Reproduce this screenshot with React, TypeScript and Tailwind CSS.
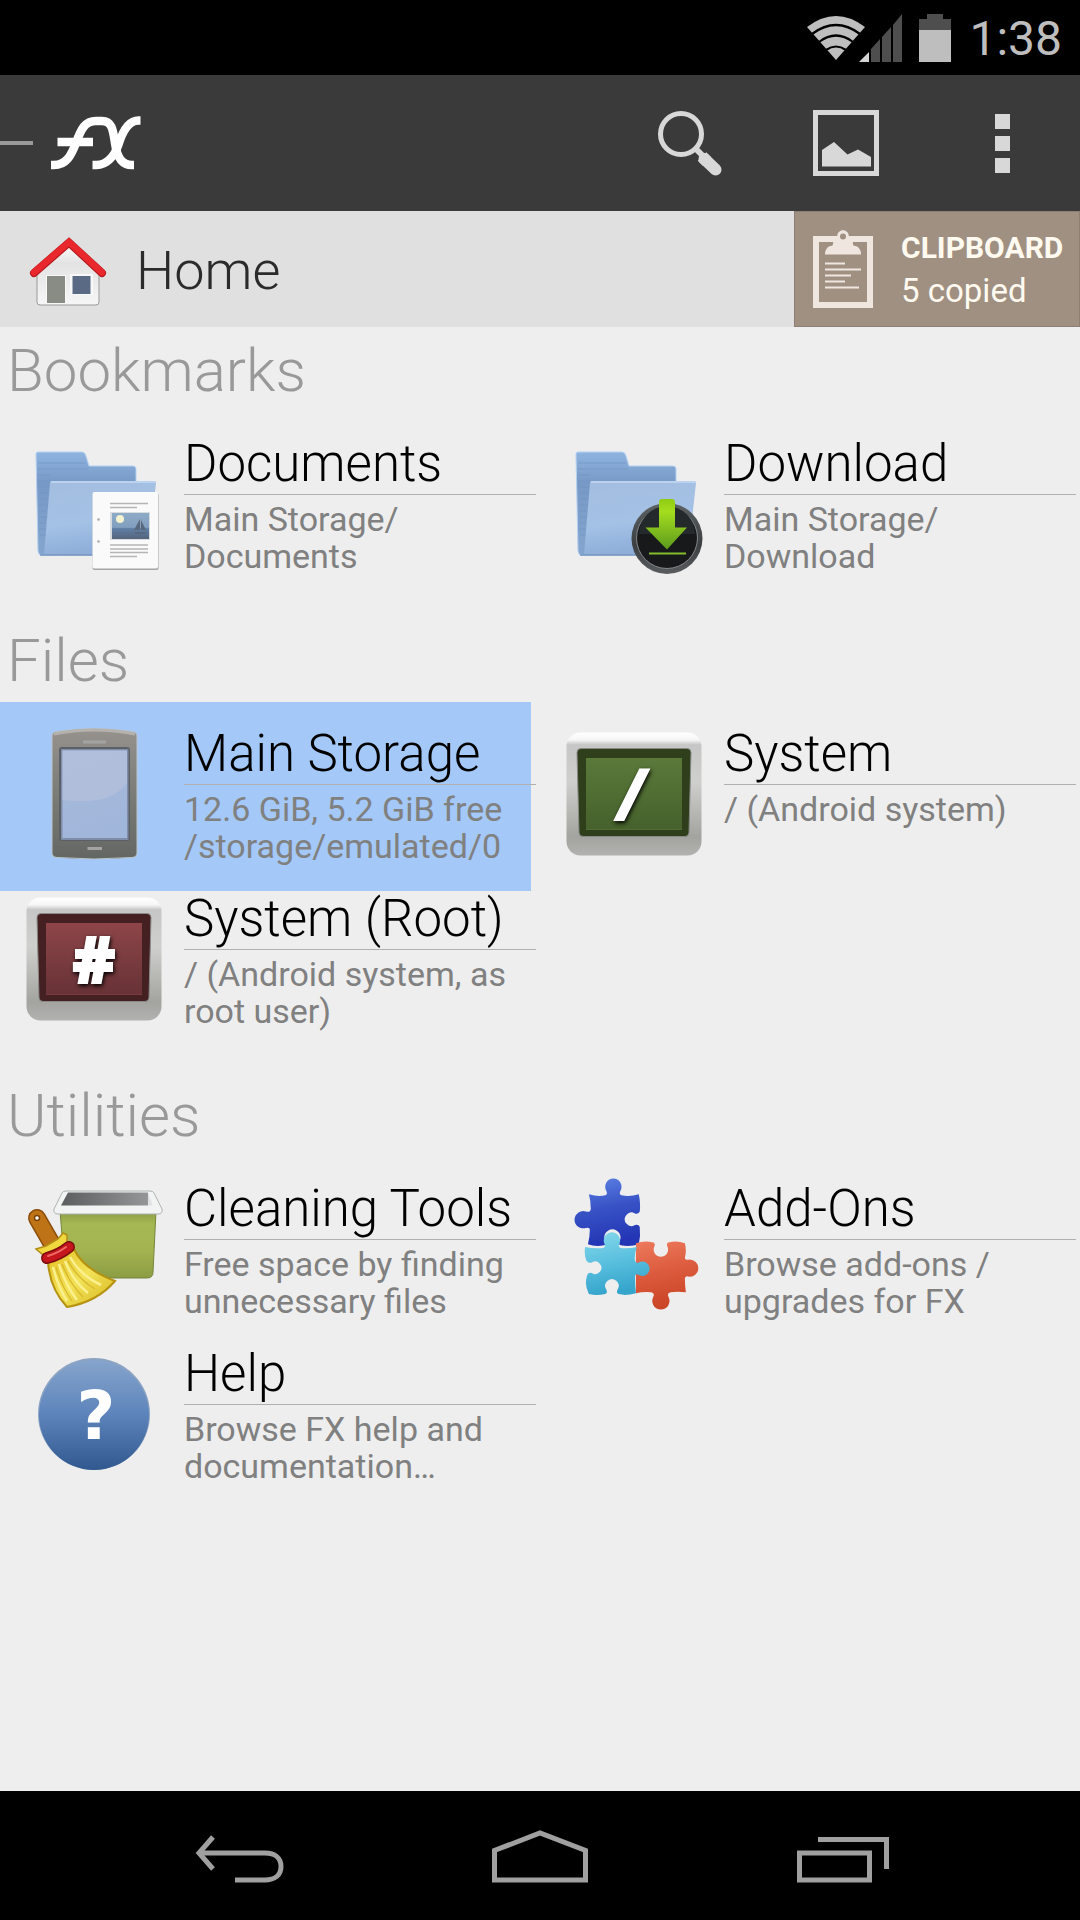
import type { ReactNode } from "react";

interface Entry {
  title: string;
  lines: string[];
  icon: ReactNode;
  selected?: boolean;
}

interface Section {
  name: string;
  entries: Entry[];
}

function FolderShape({ id }: { id: string }) {
  return (
    <>
      <defs>
        <linearGradient id={`${id}-back`} x1="0" y1="0" x2="0" y2="1">
          <stop offset="0" stopColor="#90b4e0" />
          <stop offset="0.3" stopColor="#7799c6" />
          <stop offset="1" stopColor="#84a5cd" />
        </linearGradient>
        <linearGradient id={`${id}-front`} x1="0" y1="0" x2="0.2" y2="1">
          <stop offset="0" stopColor="#a3bddf" />
          <stop offset="0.6" stopColor="#a4c2e6" />
          <stop offset="1" stopColor="#8eadd8" />
        </linearGradient>
      </defs>
      <path
        d="M14 22q0-2 2-2h44q3 0 4 4l3 10h44q3 0 3 3v86H20q-4 0-4-4z"
        fill={`url(#${id}-back)`}
        stroke="#b5d1f2"
        strokeWidth="1"
      />
      <path
        d="M16 43h12M16 49h11M16 55h11M17 61h10M17 67h9M17 73h9M17 79h8M17 85h8M17 91h7M17 97h7M18 103h6M16 37h50M16 31h48"
        stroke="#6f93c2"
        strokeWidth="2"
        opacity="0.3"
      />
      <path
        d="M28 51q0-2 2-2h102q2 0 2 2l-8 72H22z"
        fill={`url(#${id}-front)`}
      />
      <path d="M29 50h105" stroke="#c3d9f4" strokeWidth="1.6" />
      <path d="M18 123h106" stroke="#7595c0" strokeWidth="1.4" />
    </>
  );
}

function DocumentsIcon() {
  return (
    <svg viewBox="0 0 144 144" className="size-36" aria-hidden="true">
      <FolderShape id="docs" />
      <defs>
        <linearGradient id="photo" x1="0" y1="0" x2="0" y2="1">
          <stop offset="0" stopColor="#8daac6" />
          <stop offset="0.55" stopColor="#829fc0" />
          <stop offset="0.6" stopColor="#5f7fa6" />
          <stop offset="1" stopColor="#55647a" />
        </linearGradient>
      </defs>
      <rect x="70.5" y="61" width="66" height="77" rx="2" fill="#a5a5a5" />
      <rect x="70.5" y="60" width="65.5" height="76.5" rx="2" fill="#fafafa" />
      <path
        d="M88 71.500h38M88 75.500h27M88 113h38M88 117h38M88 120.500h38M88 124.500h27"
        stroke="#b5b5b5"
        strokeWidth="1.6"
      />
      <rect x="88" y="80" width="40" height="28" fill="#d9dcdf" />
      <rect x="90" y="81" width="37" height="26" fill="url(#photo)" />
      <circle cx="98" cy="87" r="4" fill="#f5f3cf" />
      <path d="M112 98l6-11v11zM119 98v-10l5 10zM112 100h13l-2 2h-9z" fill="#57677c" />
      <circle cx="76.500" cy="87.500" r="1.300" fill="#aaa" />
      <circle cx="76.500" cy="109.500" r="1.300" fill="#aaa" />
    </svg>
  );
}

function DownloadIcon() {
  return (
    <svg viewBox="0 0 144 144" className="size-36" aria-hidden="true">
      <FolderShape id="down" />
      <defs>
        <linearGradient id="ring" x1="0" y1="0" x2="0" y2="1">
          <stop offset="0" stopColor="#5d6264" />
          <stop offset="0.6" stopColor="#3b3f41" />
          <stop offset="1" stopColor="#5a5d5f" />
        </linearGradient>
        <linearGradient id="arrow" x1="0" y1="0" x2="0" y2="1">
          <stop offset="0" stopColor="#8fcc12" />
          <stop offset="0.25" stopColor="#a4dd1f" />
          <stop offset="1" stopColor="#5b9a1d" />
        </linearGradient>
      </defs>
      <circle cx="105" cy="106.500" r="35.500" fill="url(#ring)" />
      <circle cx="105" cy="106" r="30.500" fill="#17191a" stroke="#84888a" strokeWidth="1" />
      <path d="M77 102a28 28 0 0 1 56 0z" fill="#24292b" />
      <path
        d="M97 70q0-3 3-3h10q3 0 3 3v25.500h12L105 117.500 83.500 95.500H97z"
        fill="url(#arrow)"
      />
      <path d="M87 121.500h37" stroke="#86bd2c" strokeWidth="2" />
    </svg>
  );
}

function PhoneIcon() {
  return (
    <svg viewBox="0 0 144 144" className="size-36" aria-hidden="true">
      <defs>
        <linearGradient id="case" x1="0" y1="0" x2="0" y2="1">
          <stop offset="0" stopColor="#96928e" />
          <stop offset="0.3" stopColor="#858481" />
          <stop offset="1" stopColor="#636762" />
        </linearGradient>
        <linearGradient id="glass" x1="0" y1="0" x2="0.3" y2="1">
          <stop offset="0" stopColor="#a9badb" />
          <stop offset="1" stopColor="#a0b6da" />
        </linearGradient>
      </defs>
      <path
        d="M30 14q0-4 5-4.500Q72 4 110 9.500q5 .500 5 4.500v117q0 4-5 4.500-38 3-75 0-5-.500-5-4.500z"
        fill="url(#case)"
        stroke="#bcc4cc"
        strokeWidth="1"
      />
      <path d="M32 12Q72 4 113 12" stroke="#b5b1ad" strokeWidth="3" fill="none" />
      <rect x="37" y="25" width="71" height="94" rx="3" fill="#5b5f66" />
      <rect x="39" y="27" width="67.500" height="91" rx="1" fill="#7f8ea8" />
      <rect x="40.500" y="28.500" width="64.500" height="87.500" fill="url(#glass)" />
      <path d="M40.500 28.500H105v32Q90 84 40.500 78z" fill="#b5c1dd" opacity="0.7" />
      <path d="M61 20h23M65.500 126.500H80" stroke="#a3a4a1" strokeWidth="3" />
    </svg>
  );
}

interface MonitorProps {
  id: string;
  glow: string;
  shade: string;
  bezel: string;
  children: ReactNode;
}

function MonitorIcon({ id, glow, shade, bezel, children }: MonitorProps) {
  return (
    <svg viewBox="0 0 144 144" className="size-36" aria-hidden="true">
      <defs>
        <linearGradient id={`${id}-body`} x1="0" y1="0" x2="0" y2="1">
          <stop offset="0" stopColor="#fff" />
          <stop offset="0.06" stopColor="#f6f6f6" />
          <stop offset="0.1" stopColor="#c6c6c6" />
          <stop offset="0.4" stopColor="#cfcfcd" />
          <stop offset="0.85" stopColor="#a3a49f" />
          <stop offset="1" stopColor="#b2b3b0" />
        </linearGradient>
        <linearGradient id={`${id}-screen`} x1="0" y1="0" x2="0" y2="1">
          <stop offset="0" stopColor={glow} />
          <stop offset="1" stopColor={shade} />
        </linearGradient>
      </defs>
      <rect x="4.500" y="10.500" width="135" height="123" rx="14" fill={`url(#${id}-body)`} />
      <path
        d="M19 26.500H125q4 0 4 4l-2 80q0 4-4 4H21q-4 0-4-4l-2-80q0-4 4-4z"
        fill={bezel}
        stroke="#898986"
        strokeWidth="1"
      />
      <rect x="24" y="36" width="96" height="72" fill={`url(#${id}-screen)`} />
      <path d="M24 107.500h96" stroke={glow} strokeWidth="1" opacity="0.5" />
      {children}
    </svg>
  );
}

function SystemIcon() {
  return (
    <MonitorIcon id="sys" glow="#5a793a" shade="#46612c" bezel="#2f3f1c">
      <text
        x="60"
        y="92"
        fill="#fff"
        stroke="#fff"
        strokeWidth="4"
        className="font-['DejaVu_Sans',sans-serif] text-[58px] font-bold italic drop-shadow-[1px_2px_2px_#000]"
      >
        /
      </text>
    </MonitorIcon>
  );
}

function RootIcon() {
  return (
    <MonitorIcon id="root-fs" glow="#8d4549" shade="#673236" bezel="#442022">
      <text
        x="72"
        y="96"
        textAnchor="middle"
        fill="#fff"
        stroke="#fff"
        strokeWidth="2"
        className="font-['Open_Sans',sans-serif] text-[64px] font-extrabold drop-shadow-[1px_2px_2px_#000]"
      >
        #
      </text>
    </MonitorIcon>
  );
}

function CleaningIcon() {
  return (
    <svg viewBox="0 0 144 144" className="size-36" aria-hidden="true">
      <defs>
        <linearGradient id="bin" x1="0" y1="0" x2="0" y2="1">
          <stop offset="0" stopColor="#8a9d45" />
          <stop offset="0.2" stopColor="#a5b853" />
          <stop offset="0.6" stopColor="#a3b350" />
          <stop offset="1" stopColor="#8c9c43" />
        </linearGradient>
        <linearGradient id="hollow" x1="0" y1="0" x2="1" y2="0">
          <stop offset="0" stopColor="#5b5d5e" />
          <stop offset="1" stopColor="#949697" />
        </linearGradient>
        <linearGradient id="straw" x1="0" y1="0" x2="1" y2="1">
          <stop offset="0" stopColor="#e3bf22" />
          <stop offset="0.5" stopColor="#f3e258" />
          <stop offset="1" stopColor="#d5b51c" />
        </linearGradient>
      </defs>
      <path d="M38 34h96l-3 61q0 6-6 6H48q-5 0-5-6z" fill="url(#bin)" stroke="#75853a" strokeWidth="1" />
      <path
        d="M44 14h84q3 0 4 2l8 16q1 5-4 5H36q-5 0-4-5l8-16q1-2 4-2z"
        fill="#f2f4f4"
        stroke="#aeb2b4"
        strokeWidth="1"
      />
      <path d="M46 15.500h80v13H39z" fill="url(#hollow)" />
      <path d="M126 15.500l4.500 13h-4.500z" fill="#dfe1e2" />
      <path d="M15 41l15 26" stroke="#8b4d0b" strokeWidth="18" strokeLinecap="round" />
      <path d="M15 41l15 26" stroke="#bf7317" strokeWidth="15" strokeLinecap="round" />
      <circle cx="15" cy="41" r="2.500" fill="#fff" stroke="#7a4309" strokeWidth="1.500" />
      <path
        d="M14 72l10-3 12-7 5-6 4 2v8l4 6-24 13-5-8z"
        fill="#f1d83f"
        stroke="#b08d13"
        strokeWidth="1.500"
      />
      <path
        d="M26 85l26-13q9 20 41 32-18 21-48 26Q28 112 26 85z"
        fill="url(#straw)"
        stroke="#b5920f"
        strokeWidth="2"
      />
      <path
        d="M31 90q5 20 14 34M37 87q6 20 18 36M43 84q8 20 23 32M48 80q10 18 31 28"
        stroke="#fbf08e"
        strokeWidth="2.500"
        fill="none"
      />
      <path
        d="M34 90q6 20 16 34M40 87q8 20 21 33M46 84q10 18 27 28"
        stroke="#d6b62a"
        strokeWidth="1.200"
        fill="none"
      />
      <path d="M25 81q12-3 22-11" stroke="#7d0c10" strokeWidth="12" strokeLinecap="round" fill="none" />
      <path d="M25 81q12-3 22-11" stroke="#c4161c" strokeWidth="9" strokeLinecap="round" fill="none" />
      <path d="M26 79q10-3 18-9" stroke="#ee6a66" strokeWidth="2" strokeLinecap="round" fill="none" />
    </svg>
  );
}

function PuzzleIcon() {
  return (
    <svg viewBox="-4 -3 150 150" className="size-36" aria-hidden="true">
      <defs>
        <linearGradient id="piece-blue" x1="0" y1="0" x2="0.2" y2="1">
          <stop offset="0" stopColor="#5f83e6" />
          <stop offset="0.5" stopColor="#3853c6" />
          <stop offset="1" stopColor="#2436b5" />
        </linearGradient>
        <linearGradient id="piece-cyan" x1="0" y1="0" x2="0.2" y2="1">
          <stop offset="0" stopColor="#86d8ea" />
          <stop offset="0.5" stopColor="#5cc1e0" />
          <stop offset="1" stopColor="#36a5cc" />
        </linearGradient>
        <linearGradient id="piece-red" x1="0" y1="0" x2="0.2" y2="1">
          <stop offset="0" stopColor="#ee7a5c" />
          <stop offset="0.5" stopColor="#dc5b3e" />
          <stop offset="1" stopColor="#cb4527" />
        </linearGradient>
      </defs>
      <path
        d="M24 15q10 3 17 1 3-1 1-5a8.500 8.500 0 1 1 15 0q-2 4 1 5 8 2 18-1 2 10 1 18-1 3-5 2a7 7 0 1 0 0 12q4-1 5 2 1 9-1 18-9 3-19 1-3-1-1-4a8.500 8.500 0 1 0-15 0q2 3-1 4-9 2-17-1 2-8 2-15 0-3-4-2a9 9 0 1 1 0-17q5 1 5-3 0-8-2-15z"
        fill="url(#piece-blue)"
      />
      <path
        d="M73 66q9-3 17-1 4 0 2 5a7.500 7.500 0 1 0 14 0q-2-5 2-5 8-2 16 1 2 8 0 15 0 3 5 2a9 9 0 1 1 0 18q-5-2-5 2 0 6 1 14-9-1-16 0-4 1-2 5a9 9 0 1 1-16 0q2-4-2-5-8-1-16 1z"
        fill="url(#piece-red)"
      />
      <path
        d="M20 70q10 2 19 1 3-1 1-5a8.500 8.500 0 1 1 16 0q-2 4 1 5 8 1 17-1-3 8-2 14 0 3 4 2a7.500 7.500 0 1 1 0 13q-4-2-4 2 0 8 1 17-10 3-18 1-3-1-1-5a7 7 0 1 0-12 0q2 4-1 5-9 2-17 0-5-10-2-19 1-4 5-3a6.500 6.500 0 1 0 0-11q-5 1-6-3-2-6-1-13z"
        fill="url(#piece-cyan)"
      />
    </svg>
  );
}

function HelpIcon() {
  return (
    <svg viewBox="0 0 144 144" className="size-36" aria-hidden="true">
      <defs>
        <linearGradient id="help" x1="0" y1="0" x2="0" y2="1">
          <stop offset="0" stopColor="#86a4cc" />
          <stop offset="0.5" stopColor="#5c84bb" />
          <stop offset="1" stopColor="#31598f" />
        </linearGradient>
      </defs>
      <circle cx="72" cy="72" r="56" fill="#8da3c2" />
      <circle cx="72" cy="73" r="55" fill="url(#help)" />
      <text
        x="74"
        y="97"
        textAnchor="middle"
        fill="#fff"
        className="font-['DejaVu_Sans',sans-serif] text-[67px] font-bold"
      >
        ?
      </text>
    </svg>
  );
}

const sections: Section[] = [
  {
    name: "Bookmarks",
    entries: [
      { title: "Documents", lines: ["Main Storage/", "Documents"], icon: <DocumentsIcon /> },
      { title: "Download", lines: ["Main Storage/", "Download"], icon: <DownloadIcon /> },
    ],
  },
  {
    name: "Files",
    entries: [
      {
        title: "Main Storage",
        lines: ["12.6 GiB, 5.2 GiB free", "/storage/emulated/0"],
        icon: <PhoneIcon />,
        selected: true,
      },
      { title: "System", lines: ["/ (Android system)"], icon: <SystemIcon /> },
      { title: "System (Root)", lines: ["/ (Android system, as", "root user)"], icon: <RootIcon /> },
    ],
  },
  {
    name: "Utilities",
    entries: [
      { title: "Cleaning Tools", lines: ["Free space by finding", "unnecessary files"], icon: <CleaningIcon /> },
      { title: "Add-Ons", lines: ["Browse add-ons /", "upgrades for FX"], icon: <PuzzleIcon /> },
      { title: "Help", lines: ["Browse FX help and", "documentation…"], icon: <HelpIcon /> },
    ],
  },
];

function StatusBar() {
  return (
    <div className="flex h-[75px] items-center justify-end bg-black pr-[18px]">
      <svg viewBox="0 0 96 48" className="mr-4 h-12 w-24" aria-label="Wi-Fi and mobile signal">
        <path d="M0 13Q29-9 58 13L29 46z" fill="#bebebe" />
        <path
          d="M5 20Q29 2 53 20M12 28Q29 15 46 28M19 36Q29 29 39 36"
          stroke="#000"
          strokeWidth="2.200"
          fill="none"
        />
        <path d="M52 48l10-10v10z" fill="#d5d5d5" />
        <path d="M64 48V35l9-10v23zM75 48V23l9-10v35zM86 48V11l9-11v48z" fill="#4e4e4e" />
      </svg>
      <svg viewBox="0 0 32 48" className="mr-[18px] h-12 w-8" aria-label="Battery">
        <path d="M8 0h16v5h8v12H0V5h8z" fill="#4e4e4e" />
        <path d="M0 16h32v32H0z" fill="#bebebe" />
      </svg>
      <span className="pt-[3px] text-[48px] leading-[56px] text-[#bebebe]">1:38</span>
    </div>
  );
}

function ActionBar() {
  return (
    <header className="flex h-[136px] items-center bg-[#3a3a3a]">
      <button type="button" aria-label="Open menu" className="flex flex-1 items-center">
        <span className="h-1 w-[33px] bg-[#999]" />
        <svg viewBox="50 114 92 58" className="ml-[17px] h-[58px] w-[92px]">
          <g fill="none" stroke="#fff" strokeWidth="8.500">
            <path d="M51 165h3c12 0 17-9 22-22 5-14 9-22 20-22h6c10 0 11 9 13 22 2 15 7 22 17 22h2" />
            <path d="M140.500 120.500h-2c-10 0-16 11-20 24-4 12-12 20.500-22 20.500h-4" />
            <path d="M57.500 142H93" />
          </g>
        </svg>
      </button>
      <button type="button" aria-label="Search" className="flex h-full w-[156px] items-center justify-center">
        <svg viewBox="0 0 66 66" className="size-[66px]">
          <g fill="none" stroke="#d8d8d8">
            <circle cx="24" cy="24" r="20.500" strokeWidth="5" />
            <path d="M38 38l8 8" strokeWidth="6" />
            <path d="M47.500 49l11 10.500" strokeWidth="12" strokeLinecap="round" />
            <path d="M45 46.500l5 5" strokeWidth="12" />
          </g>
        </svg>
      </button>
      <button type="button" aria-label="Pictures" className="flex h-full w-[156px] items-center justify-center">
        <svg viewBox="0 0 66 66" className="size-[66px]">
          <rect x="2.500" y="2.500" width="61" height="61" fill="none" stroke="#d8d8d8" strokeWidth="5" />
          <path d="M9 40l12-8 13.500 12.500L45 39.500l13 7.500v9.500H9z" fill="#d8d8d8" />
        </svg>
      </button>
      <button type="button" aria-label="More options" className="flex h-full w-[156px] flex-col items-center justify-center gap-[7px]">
        <span className="size-[15px] bg-[#d8d8d8]" />
        <span className="size-[15px] bg-[#d8d8d8]" />
        <span className="size-[15px] bg-[#d8d8d8]" />
      </button>
    </header>
  );
}

function PathBar() {
  return (
    <nav className="flex h-[116px] bg-[#e0e0e0]">
      <button type="button" className="flex flex-1 items-center pl-7">
        <svg viewBox="0 0 80 70" className="mt-1 mr-7 h-[70px] w-20" aria-hidden="true">
          <defs>
            <linearGradient id="wall" x1="0" y1="0" x2="0" y2="1">
              <stop offset="0" stopColor="#fafafa" />
              <stop offset="0.3" stopColor="#e3e3e3" />
              <stop offset="1" stopColor="#f6f6f6" />
            </linearGradient>
          </defs>
          <path d="M41 9L71 34v32q0 3-3 3H12q-3 0-3-3V34z" fill="url(#wall)" stroke="#999" strokeWidth="1" />
          <rect x="18" y="39" width="20" height="29" fill="#f8f8f8" />
          <rect x="19" y="40" width="18" height="27" fill="#888c85" />
          <rect x="42" y="38" width="23" height="21" fill="#f8f8f8" />
          <rect x="44.500" y="40" width="18" height="18" fill="#5a6a84" />
          <path d="M6 37L41 6.500 74 37" fill="none" stroke="#b3171b" strokeWidth="8" strokeLinecap="round" />
          <path d="M6 36.500L41 6 74 36.500" fill="none" stroke="#e8282c" strokeWidth="6.500" strokeLinecap="round" />
        </svg>
        <span className="pt-1 text-[54px] leading-[64px] font-light text-[#2b2b2b]">Home</span>
      </button>
      <button
        type="button"
        className="flex w-[286px] items-center border border-[#8d7f73] bg-[#a09082] pl-[18px] text-left text-[#fffaf0]"
      >
        <svg viewBox="0 0 60 78" className="h-[78px] w-[60px]" aria-hidden="true">
          <rect x="3" y="9" width="54" height="66" fill="none" stroke="#efe6df" strokeWidth="6" />
          <path
            d="M30 0a6.500 6.500 0 0 1 6 7q4 1 4 7 0 2 3 2 5 2 5 8.500H12q0-6.500 5-8.500 3 0 3-2 0-6 4-7a6.500 6.500 0 0 1 6-7z"
            fill="#efe6df"
          />
          <circle cx="30" cy="6.500" r="3" fill="#a09082" />
          <path d="M12 33.500h20M12 39.500h36M12 45.500h26M12 51.500h20M12 57.500h34" stroke="#efe6df" strokeWidth="2" />
        </svg>
        <span className="ml-7 flex flex-col pt-[2px]">
          <span className="text-[30px] leading-[42px] font-bold">CLIPBOARD</span>
          <span className="text-[33px] leading-[44px]">5 copied</span>
        </span>
      </button>
    </nav>
  );
}

function EntryItem({ entry }: { entry: Entry }) {
  return (
    <li className="-mb-6 flex pr-[9px]">
      <button
        type="button"
        aria-pressed={entry.selected ?? false}
        className={`flex min-h-[189px] w-full min-w-0 items-start pl-[22px] text-left ${
          entry.selected ? "bg-[#a4c8f7]" : ""
        }`}
      >
        <span className="mt-5 mr-[18px] shrink-0">{entry.icon}</span>
        <span className="-mr-[5px] flex min-w-0 flex-1 flex-col pt-[22px]">
          <span className="border-b border-[#b0b0b0] text-[51px] leading-[60px] font-light whitespace-nowrap text-black">
            {entry.title}
          </span>
          <span className="flex flex-col pt-[6px] text-[34px] leading-[37px] whitespace-nowrap text-[#808080]">
            {entry.lines.map((line) => (
              <span key={line}>{line}</span>
            ))}
          </span>
        </span>
      </button>
    </li>
  );
}

function NavigationBar() {
  return (
    <footer className="flex h-[129px] bg-black px-[88px]">
      <button type="button" aria-label="Back" className="flex flex-1 items-center justify-center">
        <svg viewBox="-2 0 92 54" className="h-[54px] w-[92px]" fill="none" stroke="#a0a0a0" strokeWidth="5">
          <path d="M4 24h66c10 0 16 5 16 13.500S80 51 70 51H40" />
          <path d="M18 8L4 24l14 16" />
        </svg>
      </button>
      <button type="button" aria-label="Home screen" className="flex flex-1 items-center justify-center">
        <svg viewBox="0 0 98 54" className="h-[54px] w-[98px]" fill="none" stroke="#a0a0a0" strokeWidth="5">
          <path d="M3.500 51V21.500L49 4l45.500 17.500V51z" />
        </svg>
      </button>
      <button type="button" aria-label="Recent apps" className="flex flex-1 items-center justify-center">
        <svg viewBox="-4 0 96 54" className="h-[54px] w-24" fill="none" stroke="#a0a0a0" strokeWidth="5">
          <path d="M2.500 24h70v27h-70zM21 10.500h68.500V40" />
        </svg>
      </button>
    </footer>
  );
}

export default function App() {
  return (
    <div className="flex min-h-screen flex-col bg-[#eee] font-['Roboto','Noto_Sans',sans-serif]">
      <StatusBar />
      <ActionBar />
      <PathBar />
      <main className="flex-1 pt-2">
        {sections.map((section) => (
          <section key={section.name} className="pb-12">
            <h2 className="mb-[5px] pl-[7px] text-[60px] leading-[72px] font-light text-[#999]">
              {section.name}
            </h2>
            <ul className="grid grid-cols-2">
              {section.entries.map((entry) => (
                <EntryItem key={entry.title} entry={entry} />
              ))}
            </ul>
          </section>
        ))}
      </main>
      <NavigationBar />
    </div>
  );
}
